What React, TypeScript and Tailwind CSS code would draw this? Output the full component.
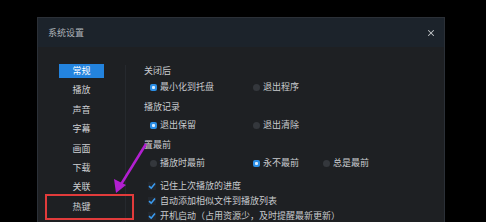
import { X } from 'lucide-react';

const font = { fontFamily: '"Noto Sans CJK SC", "Noto Sans", sans-serif' };

const navItems = ['常规', '播放', '声音', '字幕', '画面', '下载', '关联', '热键'];

function Radio({ on }: { on?: boolean }) {
  return on ? (
    <span className="flex h-[7px] w-[7px] items-center justify-center rounded-[2px] bg-[#2b8ee6]">
      <span className="h-[3px] w-[3px] rounded-[1px] bg-[#d8ecff]" />
    </span>
  ) : (
    <span className="h-[7px] w-[7px] rounded-full bg-[#34373c]" />
  );
}

function RadioOpt({ on, label, w }: { on?: boolean; label: string; w?: string }) {
  return (
    <div className={`flex items-center gap-[3px] ${w ?? ''}`}>
      <Radio on={on} />
      <span>{label}</span>
    </div>
  );
}

function Check({ label }: { label: string }) {
  return (
    <div className="flex h-[14px] items-center gap-[4px] pl-[22px]">
      <span className="flex h-[8px] w-[8px] items-center justify-center bg-[#23272d]">
        <svg width="8" height="8" viewBox="0 0 8 8">
          <path d="M1 4.2 L3.2 6.2 L7 1.6" fill="none" stroke="#3a9bf0" strokeWidth="1.6" />
        </svg>
      </span>
      <span>{label}</span>
    </div>
  );
}

export default function App() {
  return (
    <div className="relative h-[222px] w-[486px] overflow-hidden bg-black pl-[37px] pt-[17px]" style={font}>
      <div className="flex h-[220px] w-[408px] flex-col border border-[#2b3037] bg-[#1e2023] text-[9px] text-[#c9cbce]">
        {/* title bar */}
        <div className="flex h-[29px] shrink-0 items-center justify-between bg-[#1c232b] pl-[10px] pr-[8px]">
          <span className="text-[9px] text-[#aeb3b9]">系统设置</span>
          <X size={10} strokeWidth={2.5} className="text-[#c3c6ca]" />
        </div>

        <div className="flex flex-1">
          {/* sidebar */}
          <div className="flex w-[87px] flex-col items-center pt-[14px]">
            {navItems.map((n, i) => (
              <div key={n} className="flex h-[19.4px] w-full items-center justify-center">
                {i === 0 ? (
                  <span className="flex h-[14px] w-[45px] items-center justify-center bg-[#2383de] text-white">{n}</span>
                ) : (
                  <span className="text-[#cfd1d4]">{n}</span>
                )}
              </div>
            ))}
          </div>

          <div className="mt-[18px] w-px self-stretch bg-[#26292e]" />

          {/* content */}
          <div className="flex flex-1 flex-col pt-[17px]">
            <div className="flex h-[14px] items-center pl-[18px]">关闭后</div>
            <div className="mt-[2px] flex h-[14px] items-center pl-[24px]">
              <RadioOpt on label="最小化到托盘" w="w-[103px]" />
              <RadioOpt label="退出程序" />
            </div>
            <div className="mt-[6px] flex h-[14px] items-center pl-[18px]">播放记录</div>
            <div className="mt-[4px] flex h-[14px] items-center pl-[24px]">
              <RadioOpt on label="退出保留" w="w-[103px]" />
              <RadioOpt label="退出清除" />
            </div>
            <div className="mt-[6px] flex h-[14px] items-center pl-[18px]">置最前</div>
            <div className="mt-[4px] flex h-[14px] items-center pl-[24px]">
              <RadioOpt label="播放时最前" w="w-[103px]" />
              <RadioOpt on label="永不最前" w="w-[70px]" />
              <RadioOpt label="总是最前" />
            </div>
            <div className="mt-[9px]">
              <Check label="记住上次播放的进度" />
            </div>
            <div className="mt-[1px]">
              <Check label="自动添加相似文件到播放列表" />
            </div>
            <div className="mt-[1px]">
              <Check label="开机启动（占用资源少，及时提醒最新更新）" />
            </div>
          </div>
        </div>
      </div>

      {/* annotation: red box */}
      <div className="absolute left-[45px] top-[194px] h-[26px] w-[89px] border-2 border-[#e23b3b]" />

      {/* annotation: purple arrow */}
      <svg className="absolute left-0 top-0" width="486" height="222" viewBox="0 0 486 222">
        <line x1="146" y1="144" x2="120" y2="186" stroke="#b21fd1" strokeWidth="2.5" />
        <polygon points="116,193 114,179 126,185" fill="#b21fd1" />
      </svg>
    </div>
  );
}
